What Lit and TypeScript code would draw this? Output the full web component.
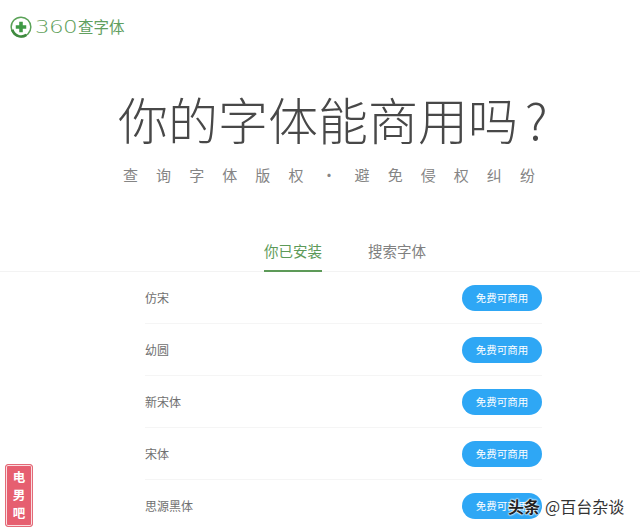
import { LitElement, html, css, svg } from "lit";
import { customElement } from "lit/decorators.js";

const ROWS = ["仿宋", "幼圆", "新宋体", "宋体", "思源黑体"];

@customElement("app-root")
export class AppRoot extends LitElement {
  static styles = css`
    :host {
      display: block;
      position: relative;
      width: 640px;
      height: 530px;
      overflow: hidden;
      background: #fff;
      font-family: "Noto Sans CJK SC", "Liberation Sans", sans-serif;
    }
    .logo {
      display: flex;
      align-items: center;
      height: 27px;
      padding: 13px 0 0 10px;
    }
    .logo-mark { width: 22px; height: 22px; flex: none; }
    .logo-num {
      font-family: "DejaVu Sans", sans-serif;
      font-size: 18px;
      font-weight: 200;
      letter-spacing: -0.5px;
      line-height: 27px;
      width: 43px;
      margin-left: 3px;
      color: #5f9f5c;
      transform: scaleX(1.28);
      transform-origin: left center;
    }
    .logo-name { font-size: 15.5px; line-height: 27px; color: #62a05f; }
    h1 {
      margin: 44px 0 0;
      height: 68px;
      padding-left: 118px;
      font-size: 50px;
      line-height: 68px;
      font-weight: 300;
      color: #484848;
      white-space: nowrap;
    }
    h1 span { margin-left: 7px; }
    .sub {
      margin-top: 13px;
      height: 20px;
      display: flex;
      justify-content: space-between;
      width: 412px;
      margin-left: 123px;
      font-size: 15px;
      line-height: 20px;
      color: #858585;
    }
    .tabs {
      margin-top: 47px;
      height: 40px;
      box-sizing: border-box;
      border-bottom: 1px solid #f3f3f3;
      display: flex;
      gap: 46px;
      padding-left: 264px;
    }
    .tab {
      font-size: 14.5px;
      line-height: 26px;
      height: 39px;
      box-sizing: border-box;
      padding-top: 6px;
      color: #808080;
    }
    .tab.on { color: #5d9a58; border-bottom: 2px solid #5d9a58; height: 40px; }
    .list { margin: 0 0 0 145px; width: 397px; }
    .row {
      height: 52px;
      box-sizing: border-box;
      display: flex;
      align-items: center;
      justify-content: space-between;
      border-bottom: 1px solid #f5f5f5;
      font-size: 12px;
      color: #707070;
    }
    .btn {
      width: 80px;
      height: 26px;
      border-radius: 13px;
      background: #2ea7f5;
      color: #fff;
      font-size: 10.5px;
      line-height: 26px;
      text-align: center;
    }
    .seal {
      position: absolute;
      left: 5px;
      top: 464px;
      width: 28px;
      height: 63px;
      box-sizing: border-box;
      border: 1px solid #e36a78;
      box-shadow: inset 0 0 0 1px #fbdde0;
      background: #e65f70;
      border-radius: 3px;
      color: #fff;
      font-size: 12.5px;
      font-weight: 700;
      line-height: 18.2px;
      text-align: center;
      padding-top: 3px;
    }
    .mark {
      position: absolute;
      left: 508px;
      top: 495px;
      display: flex;
      align-items: center;
      gap: 5px;
      white-space: nowrap;
      line-height: 22px;
      color: #222;
      text-shadow: 0 0 2px #fff, 0 0 2px #fff, 0 0 2px #fff;
    }
    .mark b { font-size: 16px; font-weight: 700; }
    .mark span { font-size: 16px; color: #333; }
  `;

  render() {
    const sub = "查询字体版权·避免侵权纠纷".split("");
    return html`
      <div class="logo">
        <svg class="logo-mark" viewBox="0 0 21 21">
          ${svg`<circle cx="10.5" cy="10.5" r="9.4" fill="none" stroke="#5aa257" stroke-width="1.4"/>
          <path d="M2.2 13a8.8 8.8 0 0 0 13.4 5" fill="none" stroke="#3f8a3f" stroke-width="2.4"/>
          <path d="M8.8 5.5h3.4v3.3h3.3v3.4h-3.3v3.3H8.8v-3.3H5.5V8.8h3.3z" fill="#3f9a45"/>`}
        </svg>
        <span class="logo-num">360</span>
        <span class="logo-name">查字体</span>
      </div>
      <h1>你的字体能商用吗<span>?</span></h1>
      <div class="sub">${sub.map((c) => html`<span>${c}</span>`)}</div>
      <div class="tabs">
        <div class="tab on">你已安装</div>
        <div class="tab">搜索字体</div>
      </div>
      <div class="list">
        ${ROWS.map((r) => html`<div class="row"><span>${r}</span><div class="btn">免费可商用</div></div>`)}
      </div>
      <div class="seal">电<br />男<br />吧</div>
      <div class="mark"><b>头条</b><span>@百台杂谈</span></div>
    `;
  }
}
